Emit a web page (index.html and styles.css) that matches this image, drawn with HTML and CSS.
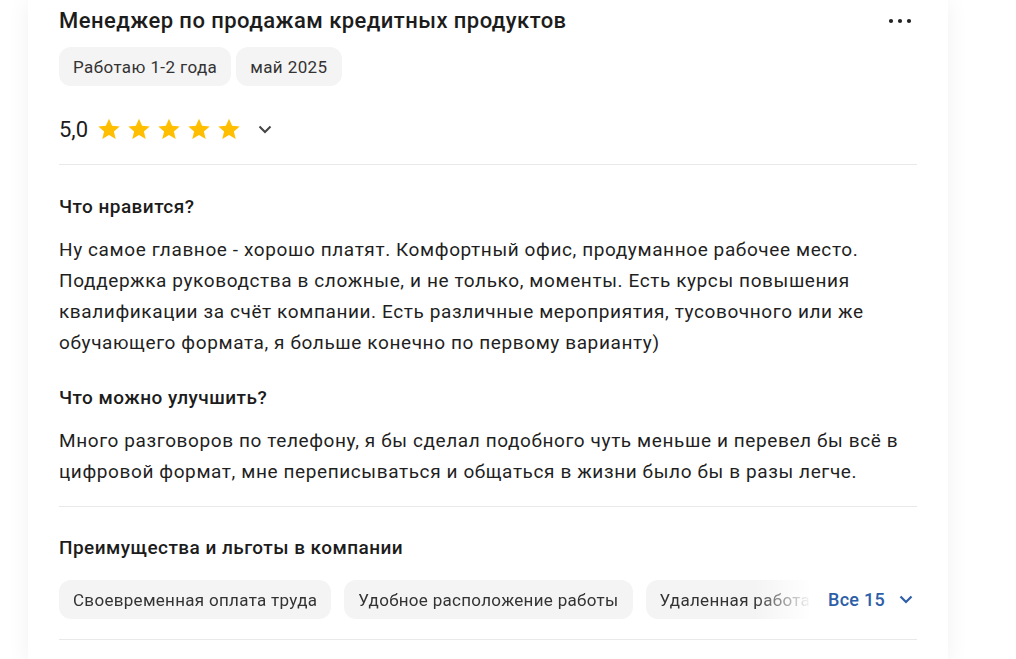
FILE: index.html
```html
<!DOCTYPE html>
<html lang="ru">
<head>
  <meta charset="UTF-8">
  <title>Отзыв сотрудника</title>
  <link rel="stylesheet" href="styles.css">
</head>
<body>
  <div class="review">
    <div class="review-head">
      <h2 class="review-title">Менеджер по продажам кредитных продуктов</h2>
      <button class="more" aria-label="Ещё">
        <svg width="24" height="6" viewBox="0 0 24 6"><circle cx="3" cy="3" r="2.1"/><circle cx="12" cy="3" r="2.1"/><circle cx="21" cy="3" r="2.1"/></svg>
      </button>
    </div>

    <div class="tags">
      <span class="tag">Работаю 1-2 года</span>
      <span class="tag">май 2025</span>
    </div>

    <div class="rating">
      <span class="rating-value">5,0</span>
      <div class="stars">
        <svg class="star" viewBox="0 0 24 24"><path d="M12 1.8l3.1 7 7.6.7-5.8 5 1.8 7.5L12 18l-6.7 4 1.8-7.5-5.8-5 7.6-.7z"/></svg>
        <svg class="star" viewBox="0 0 24 24"><path d="M12 1.8l3.1 7 7.6.7-5.8 5 1.8 7.5L12 18l-6.7 4 1.8-7.5-5.8-5 7.6-.7z"/></svg>
        <svg class="star" viewBox="0 0 24 24"><path d="M12 1.8l3.1 7 7.6.7-5.8 5 1.8 7.5L12 18l-6.7 4 1.8-7.5-5.8-5 7.6-.7z"/></svg>
        <svg class="star" viewBox="0 0 24 24"><path d="M12 1.8l3.1 7 7.6.7-5.8 5 1.8 7.5L12 18l-6.7 4 1.8-7.5-5.8-5 7.6-.7z"/></svg>
        <svg class="star" viewBox="0 0 24 24"><path d="M12 1.8l3.1 7 7.6.7-5.8 5 1.8 7.5L12 18l-6.7 4 1.8-7.5-5.8-5 7.6-.7z"/></svg>
      </div>
      <svg class="chevron" width="14" height="9" viewBox="0 0 14 9"><path d="M1.5 1.5l5.5 5.5 5.5-5.5" fill="none" stroke="currentColor" stroke-width="2"/></svg>
    </div>

    <div class="section">
      <h3 class="section-title">Что нравится?</h3>
      <p class="section-text">Ну самое главное - хорошо платят. Комфортный офис, продуманное рабочее место. Поддержка руководства в сложные, и не только, моменты. Есть курсы повышения квалификации за счёт компании. Есть различные мероприятия, тусовочного или же обучающего формата, я больше конечно по первому варианту)</p>

      <h3 class="section-title">Что можно улучшить?</h3>
      <p class="section-text">Много разговоров по телефону, я бы сделал подобного чуть меньше и перевел бы всё в цифровой формат, мне переписываться и общаться в жизни было бы в разы легче.</p>
    </div>

    <div class="section benefits">
      <h3 class="section-title">Преимущества и льготы в компании</h3>
      <div class="benefits-row">
        <div class="chips">
          <span class="chip">Своевременная оплата труда</span>
          <span class="chip">Удобное расположение работы</span>
          <span class="chip">Удаленная работа</span>
        </div>
        <button class="show-all">Все 15
          <svg width="14" height="9" viewBox="0 0 14 9"><path d="M1.5 1.5l5.5 5.5 5.5-5.5" fill="none" stroke="currentColor" stroke-width="2.2"/></svg>
        </button>
      </div>
    </div>
  </div>
</body>
</html>
```

FILE: styles.css
```css
body {
  margin: 0;
  background: #fff;
  font-family: Roboto, "Noto Sans", Arial, sans-serif;
  color: #1f1f1f;
}

.review {
  width: 858px;
  margin-left: 28px;
  padding: 6px 31px 20px;
  background: #fff;
  box-shadow: 0 0 22px rgba(0, 0, 0, 0.06);
  min-height: 640px;
}

.review-head {
  display: flex;
  align-items: center;
  justify-content: space-between;
}

.review-title {
  margin: 0;
  font-size: 22px;
  font-weight: 500;
  letter-spacing: 0.45px;
  line-height: 30px;
  color: #1c1c1c;
}

.more {
  border: 0;
  background: none;
  padding: 0;
  margin-right: 5px;
  display: flex;
  fill: #222;
  cursor: pointer;
}

.tags {
  display: flex;
  gap: 5px;
  margin-top: 11px;
}

.tag,
.chip {
  background: #f4f4f4;
  border-radius: 12px;
  height: 39px;
  padding: 0 14px;
  display: flex;
  align-items: center;
  font-size: 17px;
  letter-spacing: 0.4px;
  color: #333;
  white-space: nowrap;
}

.chip {
  letter-spacing: 0.3px;
}

.rating {
  display: flex;
  align-items: center;
  height: 34px;
  margin-top: 26px;
  padding-bottom: 18px;
  border-bottom: 1px solid #e9e9e9;
}

.rating-value {
  font-size: 22px;
  color: #1c1c1c;
  margin-right: 9px;
}

.stars {
  display: flex;
  gap: 6px;
}

.star {
  width: 24px;
  height: 24px;
  fill: #ffbf00;
}

.chevron {
  color: #444;
  margin-left: 17px;
}

.section {
  padding: 30px 0 0;
}

.section-title {
  margin: 0 0 15px;
  font-size: 19px;
  font-weight: 500;
  letter-spacing: 0.45px;
  line-height: 24px;
  color: #1c1c1c;
}

.section-text {
  margin: 0 0 28px;
  font-size: 19px;
  letter-spacing: 0.6px;
  line-height: 31px;
  color: #1f1f1f;
}

.section-text:last-child {
  margin-bottom: 19px;
}

.section.benefits {
  border-top: 1px solid #e9e9e9;
  border-bottom: 1px solid #e9e9e9;
  padding-top: 29px;
  padding-bottom: 20px;
}

.benefits-row {
  display: flex;
  align-items: center;
  margin-top: 20px;
}

.chips {
  display: flex;
  gap: 13px;
  overflow: hidden;
  width: 753px;
  -webkit-mask-image: linear-gradient(to right, #000 695px, transparent 753px);
  mask-image: linear-gradient(to right, #000 695px, transparent 753px);
}

.show-all {
  border: 0;
  background: none;
  padding: 0;
  margin-left: 16px;
  display: flex;
  align-items: center;
  gap: 14px;
  font-family: inherit;
  font-size: 18px;
  font-weight: 500;
  letter-spacing: 0.3px;
  color: #2d5ea8;
  cursor: pointer;
}
```
